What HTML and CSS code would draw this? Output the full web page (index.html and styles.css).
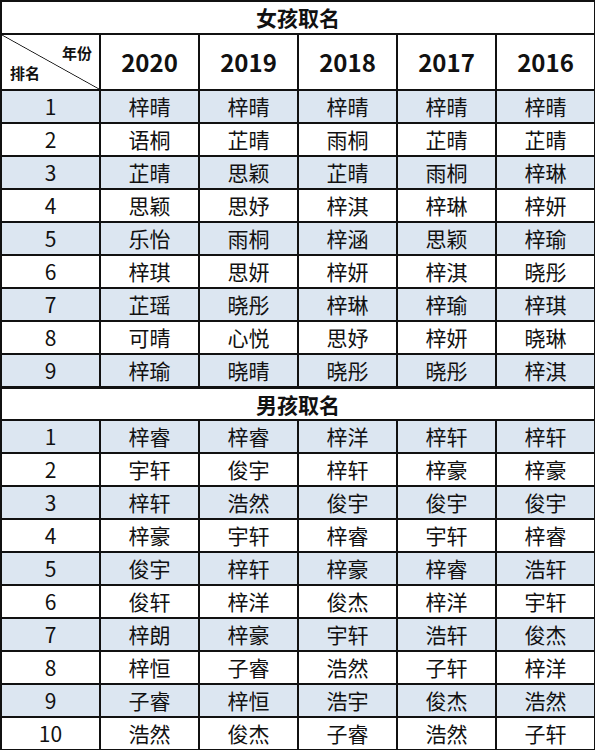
FILE: index.html
```html
<!DOCTYPE html>
<html lang="zh">
<head>
<meta charset="utf-8">
<link rel="stylesheet" href="styles.css">
</head>
<body>
<table class="names">
  <colgroup>
    <col class="c"><col class="c"><col class="c"><col class="c"><col class="c"><col class="c">
  </colgroup>
  <tbody>
    <tr class="title"><td colspan="6">女孩取名</td></tr>
    <tr class="head">
      <td class="corner"><div class="corner-in"><span class="yr">年份</span><span class="rk">排名</span></div></td>
      <td>2020</td><td>2019</td><td>2018</td><td>2017</td><td>2016</td>
    </tr>
    <tr class="odd"><td>1</td><td>梓晴</td><td>梓晴</td><td>梓晴</td><td>梓晴</td><td>梓晴</td></tr>
    <tr><td>2</td><td>语桐</td><td>芷晴</td><td>雨桐</td><td>芷晴</td><td>芷晴</td></tr>
    <tr class="odd"><td>3</td><td>芷晴</td><td>思颖</td><td>芷晴</td><td>雨桐</td><td>梓琳</td></tr>
    <tr><td>4</td><td>思颖</td><td>思妤</td><td>梓淇</td><td>梓琳</td><td>梓妍</td></tr>
    <tr class="odd"><td>5</td><td>乐怡</td><td>雨桐</td><td>梓涵</td><td>思颖</td><td>梓瑜</td></tr>
    <tr><td>6</td><td>梓琪</td><td>思妍</td><td>梓妍</td><td>梓淇</td><td>晓彤</td></tr>
    <tr class="odd"><td>7</td><td>芷瑶</td><td>晓彤</td><td>梓琳</td><td>梓瑜</td><td>梓琪</td></tr>
    <tr><td>8</td><td>可晴</td><td>心悦</td><td>思妤</td><td>梓妍</td><td>晓琳</td></tr>
    <tr class="odd last"><td>9</td><td>梓瑜</td><td>晓晴</td><td>晓彤</td><td>晓彤</td><td>梓淇</td></tr>
    <tr class="title section"><td colspan="6">男孩取名</td></tr>
    <tr class="odd"><td>1</td><td>梓睿</td><td>梓睿</td><td>梓洋</td><td>梓轩</td><td>梓轩</td></tr>
    <tr><td>2</td><td>宇轩</td><td>俊宇</td><td>梓轩</td><td>梓豪</td><td>梓豪</td></tr>
    <tr class="odd"><td>3</td><td>梓轩</td><td>浩然</td><td>俊宇</td><td>俊宇</td><td>俊宇</td></tr>
    <tr><td>4</td><td>梓豪</td><td>宇轩</td><td>梓睿</td><td>宇轩</td><td>梓睿</td></tr>
    <tr class="odd"><td>5</td><td>俊宇</td><td>梓轩</td><td>梓豪</td><td>梓睿</td><td>浩轩</td></tr>
    <tr><td>6</td><td>俊轩</td><td>梓洋</td><td>俊杰</td><td>梓洋</td><td>宇轩</td></tr>
    <tr class="odd"><td>7</td><td>梓朗</td><td>梓豪</td><td>宇轩</td><td>浩轩</td><td>俊杰</td></tr>
    <tr><td>8</td><td>梓恒</td><td>子睿</td><td>浩然</td><td>子轩</td><td>梓洋</td></tr>
    <tr class="odd"><td>9</td><td>子睿</td><td>梓恒</td><td>浩宇</td><td>俊杰</td><td>浩然</td></tr>
    <tr><td>10</td><td>浩然</td><td>俊杰</td><td>子睿</td><td>浩然</td><td>子轩</td></tr>
  </tbody>
</table>
</body>
</html>
```

FILE: styles.css
```css
html, body {
  margin: 0;
  padding: 0;
  background: #fff;
}

.names {
  border-collapse: collapse;
  table-layout: fixed;
  width: 595px;
  font-family: "Noto Sans CJK SC", "Microsoft YaHei", sans-serif;
  color: #111;
}

.names .c {
  width: 99px;
}

.names td {
  border: 2px solid #111;
  text-align: center;
  vertical-align: middle;
  padding: 0;
  height: 31px;
  font-size: 21px;
  line-height: 1;
}

.names tr.odd td {
  background: #dce6f1;
}

.names tr.title td {
  font-weight: 700;
  font-size: 21px;
  background: #fff;
  height: 31px;
}

.names tr.section td {
  height: 30px;
  border-top-width: 3px;
}

.names tr.head td {
  height: 54px;
  font-weight: 700;
  font-size: 24px;
}

.names td.corner {
  background: linear-gradient(to top right, transparent calc(50% - 0.8px), #111 50%, transparent calc(50% + 0.8px));
  padding: 0;
}

.corner-in {
  display: flex;
  flex-direction: column;
  justify-content: space-between;
  height: 54px;
  box-sizing: border-box;
  padding: 10px 7px 9px 8px;
  font-size: 15px;
  font-weight: 700;
  line-height: 1;
}

.corner-in .yr {
  align-self: flex-end;
}

.corner-in .rk {
  align-self: flex-start;
}
```
